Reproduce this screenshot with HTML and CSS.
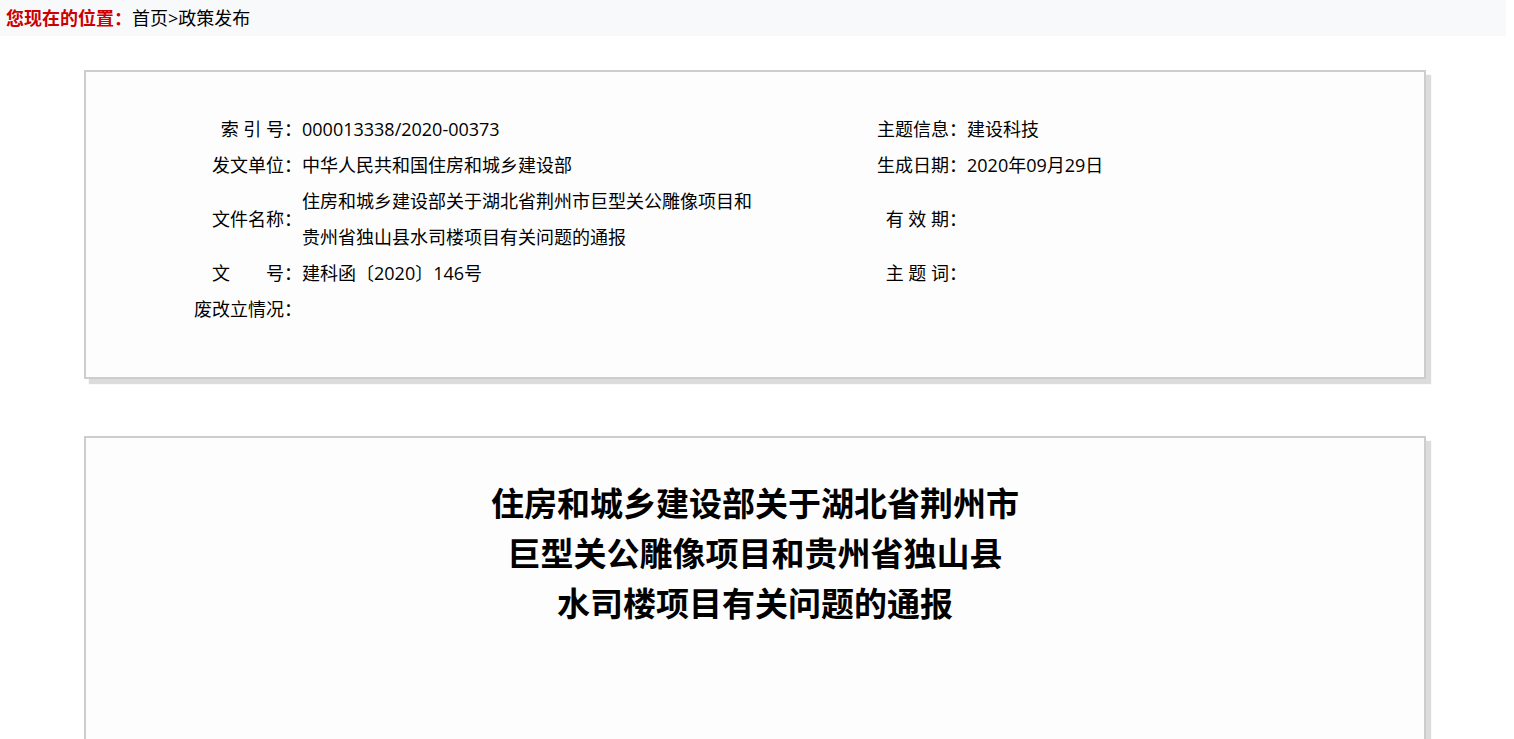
FILE: index.html
```html
<!DOCTYPE html>
<html lang="zh-CN">
<head>
    <meta charset="UTF-8">
    <meta name="viewport" content="width=device-width, initial-scale=1.0">
    <title>住房和城乡建设部关于湖北省荆州市巨型关公雕像项目和贵州省独山县水司楼项目有关问题的通报</title>
    <link rel="stylesheet" href="styles.css">
</head>
<body>
    <div class="crumb">
        <span class="crumb-label">您现在的位置：</span><a href="#">首页</a>&gt;<a href="#">政策发布</a>
    </div>

    <div class="card info">
        <div class="info-grid">
            <div class="label">索 引 号：</div>
            <div class="value">000013338/2020-00373</div>
            <div class="label">主题信息：</div>
            <div class="value">建设科技</div>

            <div class="label">发文单位：</div>
            <div class="value">中华人民共和国住房和城乡建设部</div>
            <div class="label">生成日期：</div>
            <div class="value">2020年09月29日</div>

            <div class="label">文件名称：</div>
            <div class="value">住房和城乡建设部关于湖北省荆州市巨型关公雕像项目和贵州省独山县水司楼项目有关问题的通报</div>
            <div class="label">有 效 期：</div>
            <div class="value"></div>

            <div class="label">文　　号：</div>
            <div class="value">建科函〔2020〕146号</div>
            <div class="label">主 题 词：</div>
            <div class="value"></div>

            <div class="label">废改立情况：</div>
            <div class="value"></div>
        </div>
    </div>

    <div class="card article">
        <h1 class="title">住房和城乡建设部关于湖北省荆州市<br>巨型关公雕像项目和贵州省独山县<br>水司楼项目有关问题的通报</h1>
    </div>
</body>
</html>
```

FILE: styles.css
```css
body {
    margin: 0;
    background-color: #fff;
    color: #000;
    font-family: "Open Sans", "Noto Sans CJK SC", sans-serif;
    font-size: 18px;
}
a {
    color: #000;
    text-decoration: none;
}
.crumb {
    height: 36px;
    line-height: 36px;
    margin-right: 8px;
    padding-left: 6px;
    background-color: #f8f9fb;
}
.crumb-label {
    color: #cc0000;
    font-weight: bold;
}
.card {
    width: 1338px;
    margin: 34px 0 0 84px;
    border: 2px solid #cdcdcd;
    background-color: #fdfdfd;
    box-shadow: 5px 5px 1px #dcdcdc;
}
.info {
    padding: 39px 0 50px;
}
.article {
    margin-top: 57px;
    padding: 39px 0 0;
    min-height: 400px;
}
.info-grid {
    display: grid;
    grid-template-columns: 216px 460px 205px 1fr;
    line-height: 36px;
}
.label {
    text-align: right;
    align-self: center;
    white-space: pre;
}
.value {
    min-height: 36px;
}
.title {
    margin: 0;
    text-align: center;
    font-family: "Noto Sans CJK SC", sans-serif;
    font-size: 33px;
    line-height: 50px;
    font-weight: bold;
}
```
